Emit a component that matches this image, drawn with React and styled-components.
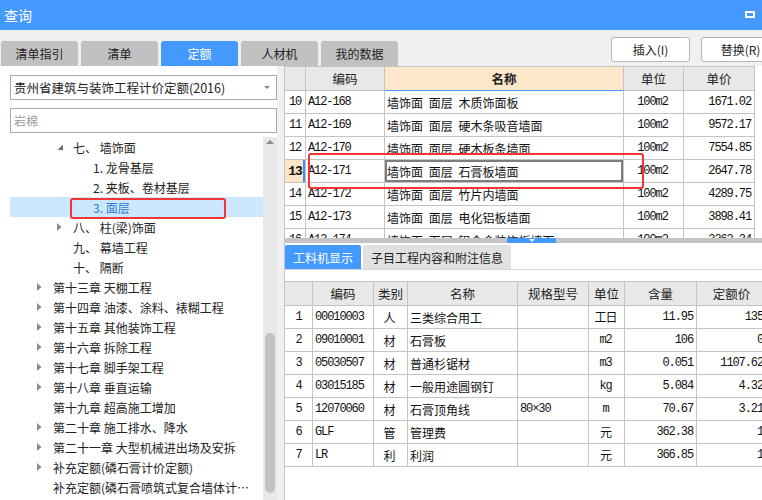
import React from 'react';
import styled, { createGlobalStyle } from 'styled-components';

const GlobalStyle = createGlobalStyle`
  html, body {
    margin: 0;
    padding: 0;
  }
  body {
    font-family: "Noto Sans CJK SC", "Liberation Sans", sans-serif;
    font-size: 12px;
    color: #222;
    background: #f0f0f0;
  }
  * {
    box-sizing: border-box;
  }
`;

const Window = styled.div`
  width: 762px;
  height: 500px;
  overflow: hidden;
  display: flex;
  flex-direction: column;
  background: #f0f0f0;
`;

const TitleBar = styled.div`
  height: 30px;
  flex: none;
  background: #4499ff;
  color: #fff;
  font-size: 14px;
  display: flex;
  align-items: center;
  justify-content: space-between;
  padding: 0 7px 0 4px;
`;

const MaxIcon = styled.span`
  width: 10px;
  height: 7px;
  border: 2px solid #fff;
  border-top-width: 2.5px;
  margin-bottom: 1px;
`;

const Toolbar = styled.div`
  height: 36px;
  flex: none;
  display: flex;
  align-items: flex-end;
  padding-left: 1px;
  overflow: hidden;
`;

const Tab = styled.div`
  width: 77px;
  height: 25px;
  margin-right: 3px;
  border-radius: 3px 3px 0 0;
  background: ${p => (p.$active ? '#4499ff' : '#c1c1c1')};
  color: ${p => (p.$active ? '#fff' : '#222')};
  display: flex;
  align-items: center;
  justify-content: center;
`;

const ButtonGroup = styled.div`
  align-self: flex-start;
  margin: 7px -18px 0 auto;
  display: flex;
  gap: 11px;
`;

const Button = styled.div`
  width: 79px;
  height: 25px;
  border: 1px solid #b5b5b5;
  border-radius: 3px;
  background: #fff;
  display: flex;
  align-items: center;
  justify-content: center;
  flex: none;
`;

const Body = styled.div`
  flex: 1;
  min-height: 0;
  display: flex;
`;

/* ---- left panel ---- */

const LeftPanel = styled.div`
  width: 277px;
  flex: none;
  background: #fff;
  display: flex;
  flex-direction: column;
  padding: 9px 0 0 10px;
`;

const Select = styled.div`
  height: 25px;
  border: 1px solid #a9a9a9;
  display: flex;
  align-items: center;
  padding-left: 3px;
  font-size: 12.5px;
  color: #222;
`;

const Caret = styled.span`
  margin: 0 6px 0 auto;
  border-left: 3px solid transparent;
  border-right: 3px solid transparent;
  border-top: 3px solid #8a8a8a;
`;

const Search = styled.div`
  margin-top: 8px;
  height: 25px;
  border: 1px solid #a9a9a9;
  display: flex;
  align-items: center;
  padding-left: 3px;
  color: #9a9a9a;
`;

const TreeArea = styled.div`
  margin-top: 4px;
  flex: 1;
  min-height: 0;
  display: flex;
`;

const TreeList = styled.div`
  flex: 1;
  overflow: hidden;
`;

const TreeRow = styled.div`
  position: relative;
  height: 20px;
  display: flex;
  align-items: center;
  padding-left: ${p => 27 + p.$level * 20}px;
  background: ${p => (p.$selected ? '#cce8ff' : 'transparent')};
  color: ${p => (p.$selected ? '#2f78d6' : '#222')};
  white-space: nowrap;
`;

const Toggle = styled.span`
  width: 16px;
  flex: none;
  display: flex;
  align-items: center;
`;

const Label = styled.span`
  overflow: hidden;
  text-overflow: ellipsis;
  padding-right: 4px;
`;

const Highlight = styled.div`
  position: absolute;
  border: 2px solid #f23434;
  border-radius: 3px;
  pointer-events: none;
  left: ${p => p.$left}px;
  top: ${p => p.$top}px;
  width: ${p => p.$width}px;
  height: ${p => p.$height}px;
`;

const ScrollBar = styled.div`
  width: 14px;
  flex: none;
  background: #e8e8e8;
  display: flex;
  flex-direction: column;
  align-items: center;
  padding-top: 3px;
`;

const UpArrow = styled.span`
  border-left: 4px solid transparent;
  border-right: 4px solid transparent;
  border-bottom: 4px solid #8a8a8a;
`;

const Thumb = styled.div`
  margin-top: 189px;
  width: 10px;
  height: 160px;
  border-radius: 5px;
  background: #c2c2c2;
`;

/* ---- right panel ---- */

const RightPanel = styled.div`
  flex: 1;
  margin-left: 7px;
  display: flex;
  flex-direction: column;
  min-width: 0;
`;

const UpperPane = styled.div`
  position: relative;
  height: 172px;
  flex: none;
  background: #fff;
  overflow: hidden;
`;

const Table = styled.table`
  table-layout: fixed;
  border-collapse: separate;
  border-spacing: 0;
  width: ${p => p.$width}px;
  border-top: 1px solid #c4c4c4;
  border-left: ${p => (p.$noLeft ? 'none' : '1px solid #c4c4c4')};
`;

const Col = styled.col`
  width: ${p => p.$w}px;
`;

const HeadRow = styled.tr`
  height: 24px;
`;

const Row = styled.tr`
  height: 23px;
`;

const Th = styled.th`
  padding: 0;
  font-weight: ${p => (p.$bold ? 700 : 400)};
  font-size: 12.5px;
  color: #222;
  background: ${p => (p.$accent ? '#fde7cb' : '#e8e8e8')};
  border-right: 1px solid #c4c4c4;
  border-bottom: 1px solid ${p => (p.$accent ? '#4499ff' : '#c4c4c4')};
  text-align: center;
`;

const Td = styled.td`
  padding: 0 ${p => (p.$align === 'right' ? 3 : 2)}px 0 ${p => (p.$align === 'left' ? 2 : 0)}px;
  border-right: 1px solid #c4c4c4;
  border-bottom: 1px solid #c4c4c4;
  text-align: ${p => p.$align || 'left'};
  white-space: nowrap;
  overflow: hidden;
  color: #111;
  font-family: ${p => (p.$mono ? '"Liberation Mono", "Noto Sans CJK SC", monospace' : 'inherit')};
  font-size: 12px;
  letter-spacing: ${p => (p.$mono ? '-1.1px' : '0')};
  word-spacing: ${p => (p.$mono ? '0' : '3px')};
`;

const RowNum = styled(Td)`
  text-align: center;
  padding: 0;
  background: ${p => (p.$current ? '#fde6c8' : '#fff')};
  font-weight: ${p => (p.$current ? 700 : 400)};
  font-size: ${p => (p.$current ? '13px' : '12px')};
  box-shadow: ${p => (p.$current ? 'inset -2px 0 0 #3d8ef0' : 'none')};
`;

const NameCell = styled(Td)`
  box-shadow: ${p => (p.$focus ? 'inset 0 0 0 2px #7d7d7d' : 'none')};
`;

const Splitter = styled.div`
  height: 5px;
  flex: none;
  background: #c4c4c4;
  display: flex;
`;

const SplitHandle = styled.div`
  margin-left: 223px;
  width: 49px;
  height: 5px;
  background: #4499ff;
  display: flex;
  justify-content: center;
  align-items: center;
`;

const DownTick = styled.span`
  border-left: 3px solid transparent;
  border-right: 3px solid transparent;
  border-top: 3px solid #fff;
`;

const LowerPane = styled.div`
  flex: 1;
  min-height: 0;
  background: #fff;
  border-left: 1px solid #c4c4c4;
  overflow: hidden;
  padding-top: 2px;
`;

const SubTabs = styled.div`
  display: flex;
  height: 25px;
  border-bottom: 1px solid #d6d6d6;
`;

const SubTab = styled.div`
  height: 24px;
  padding: 0 8px;
  margin-right: 2px;
  border-radius: 2px 2px 0 0;
  display: flex;
  align-items: center;
  background: ${p => (p.$active ? '#4499ff' : '#e1e1e1')};
  color: ${p => (p.$active ? '#fff' : '#222')};
`;

const LowerTableWrap = styled.div`
  margin-top: 11px;
`;

const tree = [
  { level: 1, toggle: 'open', label: '七、 墙饰面' },
  { level: 2, label: '1. 龙骨基层' },
  { level: 2, label: '2. 夹板、卷材基层' },
  { level: 2, label: '3. 面层', selected: true },
  { level: 1, toggle: 'closed', label: '八、 柱(梁)饰面' },
  { level: 1, label: '九、 幕墙工程' },
  { level: 1, label: '十、 隔断' },
  { level: 0, toggle: 'closed', label: '第十三章 天棚工程' },
  { level: 0, toggle: 'closed', label: '第十四章 油漆、涂料、裱糊工程' },
  { level: 0, toggle: 'closed', label: '第十五章 其他装饰工程' },
  { level: 0, toggle: 'closed', label: '第十六章 拆除工程' },
  { level: 0, toggle: 'closed', label: '第十七章 脚手架工程' },
  { level: 0, toggle: 'closed', label: '第十八章 垂直运输' },
  { level: 0, label: '第十九章 超高施工增加' },
  { level: 0, toggle: 'closed', label: '第二十章 施工排水、降水' },
  { level: 0, toggle: 'closed', label: '第二十一章 大型机械进出场及安拆' },
  { level: 0, toggle: 'closed', label: '补充定额(磷石膏计价定额)' },
  { level: 0, label: '补充定额(磷石膏喷筑式复合墙体计价定额)' },
];

const quotas = [
  ['10', 'A12-168', '墙饰面 面层 木质饰面板', '100m2', '1671.02'],
  ['11', 'A12-169', '墙饰面 面层 硬木条吸音墙面', '100m2', '9572.17'],
  ['12', 'A12-170', '墙饰面 面层 硬木板条墙面', '100m2', '7554.85'],
  ['13', 'A12-171', '墙饰面 面层 石膏板墙面', '100m2', '2647.78'],
  ['14', 'A12-172', '墙饰面 面层 竹片内墙面', '100m2', '4289.75'],
  ['15', 'A12-173', '墙饰面 面层 电化铝板墙面', '100m2', '3898.41'],
  ['16', 'A12-174', '墙饰面 面层 铝合金装饰板墙面', '100m2', '3362.34'],
];

const resources = [
  ['1', '00010003', '人', '三类综合用工', '', '工日', '11.95', '135'],
  ['2', '09010001', '材', '石膏板', '', 'm2', '106', '0'],
  ['3', '05030507', '材', '普通杉锯材', '', 'm3', '0.051', '1107.62'],
  ['4', '03015185', '材', '一般用途圆钢钉', '', 'kg', '5.084', '4.32'],
  ['5', '12070060', '材', '石膏顶角线', '80×30', 'm', '70.67', '3.21'],
  ['6', 'GLF', '管', '管理费', '', '元', '362.38', '1'],
  ['7', 'LR', '利', '利润', '', '元', '366.85', '1'],
];

const ToggleIcon = ({ kind }) => {
  if (kind === 'open') {
    return (
      <svg width="7" height="7" viewBox="0 0 7 7">
        <polygon points="6,0.5 6,6 0.5,6" fill="#6e6e6e" />
      </svg>
    );
  }
  if (kind === 'closed') {
    return (
      <svg width="5" height="8" viewBox="0 0 5 8">
        <polygon points="0,0 4.5,4 0,8" fill="#8a8a8a" />
      </svg>
    );
  }
  return null;
};

const App = () => {
  return (
    <Window>
      <GlobalStyle />
      <TitleBar>
        <span>查询</span>
        <MaxIcon />
      </TitleBar>

      <Toolbar>
        <Tab>清单指引</Tab>
        <Tab>清单</Tab>
        <Tab $active>定额</Tab>
        <Tab>人材机</Tab>
        <Tab>我的数据</Tab>
        <ButtonGroup>
          <Button>插入(I)</Button>
          <Button>替换(R)</Button>
        </ButtonGroup>
      </Toolbar>

      <Body>
        <LeftPanel>
          <Select>
            贵州省建筑与装饰工程计价定额(2016)
            <Caret />
          </Select>
          <Search>岩棉</Search>
          <TreeArea>
            <TreeList>
              {tree.map(item => (
                <TreeRow key={item.label} $level={item.level} $selected={item.selected}>
                  <Toggle>
                    <ToggleIcon kind={item.toggle} />
                  </Toggle>
                  <Label>{item.label}</Label>
                  {item.selected && <Highlight $left={60} $top={1} $width={156} $height={21} />}
                </TreeRow>
              ))}
            </TreeList>
            <ScrollBar>
              <UpArrow />
              <Thumb />
            </ScrollBar>
          </TreeArea>
        </LeftPanel>

        <RightPanel>
          <UpperPane>
            <Table $width={471}>
              <colgroup>
                <Col $w={21} />
                <Col $w={79} />
                <Col $w={239} />
                <Col $w={60} />
                <Col $w={71} />
              </colgroup>
              <thead>
                <HeadRow>
                  <Th />
                  <Th>编码</Th>
                  <Th $accent $bold>名称</Th>
                  <Th>单位</Th>
                  <Th>单价</Th>
                </HeadRow>
              </thead>
              <tbody>
                {quotas.map(([num, code, name, unit, price]) => {
                  const current = num === '13';
                  return (
                    <Row key={num}>
                      <RowNum $mono $current={current}>{num}</RowNum>
                      <Td $mono $align="left">{code}</Td>
                      <NameCell $align="left" $focus={current}>{name}</NameCell>
                      <Td $mono $align="center">{unit}</Td>
                      <Td $mono $align="right">{price}</Td>
                    </Row>
                  );
                })}
              </tbody>
            </Table>
            <Highlight $left={24} $top={87} $width={336} $height={36} />
          </UpperPane>

          <Splitter>
            <SplitHandle>
              <DownTick />
            </SplitHandle>
          </Splitter>

          <LowerPane>
            <SubTabs>
              <SubTab $active>工料机显示</SubTab>
              <SubTab>子目工程内容和附注信息</SubTab>
            </SubTabs>
            <LowerTableWrap>
              <Table $width={482} $noLeft>
                <colgroup>
                  <Col $w={28} />
                  <Col $w={61} />
                  <Col $w={34} />
                  <Col $w={110} />
                  <Col $w={71} />
                  <Col $w={36} />
                  <Col $w={72} />
                  <Col $w={70} />
                </colgroup>
                <thead>
                  <HeadRow>
                    <Th />
                    <Th>编码</Th>
                    <Th>类别</Th>
                    <Th>名称</Th>
                    <Th>规格型号</Th>
                    <Th>单位</Th>
                    <Th>含量</Th>
                    <Th>定额价</Th>
                  </HeadRow>
                </thead>
                <tbody>
                  {resources.map(([num, code, kind, name, spec, unit, qty, price]) => (
                    <Row key={num}>
                      <RowNum $mono>{num}</RowNum>
                      <Td $mono $align="left">{code}</Td>
                      <Td $align="center">{kind}</Td>
                      <Td $align="left">{name}</Td>
                      <Td $mono $align="left">{spec}</Td>
                      <Td $mono $align="center">{unit}</Td>
                      <Td $mono $align="right">{qty}</Td>
                      <Td $mono $align="right">{price}</Td>
                    </Row>
                  ))}
                </tbody>
              </Table>
            </LowerTableWrap>
          </LowerPane>
        </RightPanel>
      </Body>
    </Window>
  );
};

export default App;
